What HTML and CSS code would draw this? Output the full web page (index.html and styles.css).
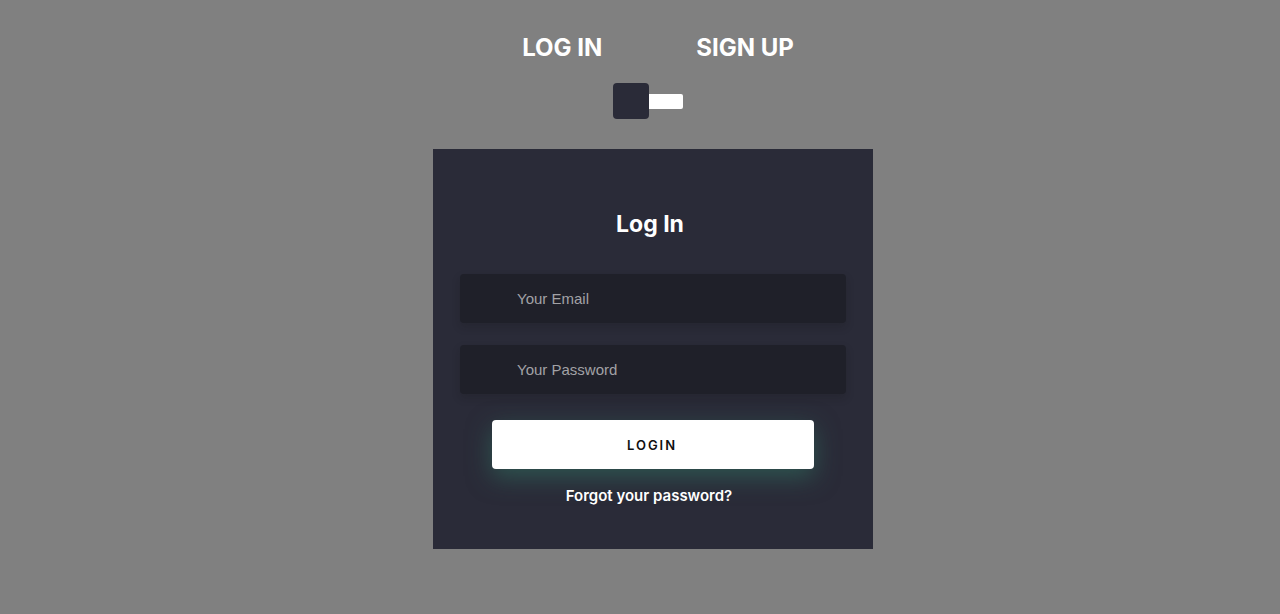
FILE: index.html
```html
<!DOCTYPE html>
<html>
<head>
<meta charset="utf-8">
<link rel="stylesheet" href="styles.css">
</head>
<body>
<div class="page">
  <div class="tabs">
    <span class="tab">LOG IN</span>
    <span class="tab">SIGN UP</span>
  </div>
  <div class="toggle">
    <div class="knob"></div>
    <div class="bar"></div>
  </div>
  <div class="card">
    <h2 class="title">Log In</h2>
    <div class="field"><span class="ph">Your Email</span></div>
    <div class="field"><span class="ph">Your Password</span></div>
    <button class="btn">LOGIN</button>
    <div class="forgot">Forgot your password?</div>
  </div>
</div>
</body>
</html>
```
FILE: styles.css
```css
html, body {
  margin: 0;
  padding: 0;
  background: #808080;
  height: 100%;
}
body {
  font-family: "Inter", "DejaVu Sans", sans-serif;
}
.page {
  display: flex;
  flex-direction: column;
  align-items: center;
  padding-top: 34px;
  padding-left: 26px;
}
.tabs {
  display: flex;
  gap: 94px;
  margin-left: 10px;
}
.tab {
  color: #fff;
  font-weight: 700;
  font-size: 24px;
  letter-spacing: 0;
  line-height: 28px;
}
.toggle {
  display: flex;
  align-items: center;
  margin-top: 21px;
  margin-left: -10px;
}
.knob {
  width: 36px;
  height: 36px;
  background: #2a2b38;
  border-radius: 4px;
}
.bar {
  width: 34px;
  height: 15px;
  background: #fff;
  border-radius: 0 2px 2px 0;
}
.card {
  margin-top: 30px;
  width: 440px;
  height: 400px;
  box-sizing: border-box;
  background: #2a2b38;
  display: flex;
  flex-direction: column;
  align-items: center;
  padding-top: 60px;
}
.title {
  margin: 0;
  color: #fff;
  font-size: 23px;
  font-weight: 700;
  line-height: 30px;
  letter-spacing: 0;
  margin-left: -6px;
}
.field {
  width: 386px;
  height: 49px;
  background: #1f2029;
  border-radius: 4px;
  box-shadow: 0 4px 8px rgba(21, 21, 21, 0.2);
  display: flex;
  align-items: center;
  box-sizing: border-box;
  padding-left: 57px;
  margin-top: 22px;
}
.title + .field {
  margin-top: 35px;
}
.ph {
  font-family: "Liberation Sans", Arial, sans-serif;
  color: #a2a2a6;
  font-size: 15px;
}
.btn {
  margin-top: 26px;
  width: 322px;
  height: 49px;
  border: none;
  border-radius: 4px;
  background: #fff;
  color: #111;
  font-family: "Inter", sans-serif;
  font-weight: 600;
  font-size: 13px;
  letter-spacing: 2px;
  padding-left: 4px;
  box-shadow: 0 8px 24px 0 rgba(50, 120, 100, 0.55);
}
.forgot {
  margin-top: 17px;
  color: #fff;
  font-size: 15px;
  font-weight: 600;
  margin-left: -8px;
  letter-spacing: 0;
}
```
